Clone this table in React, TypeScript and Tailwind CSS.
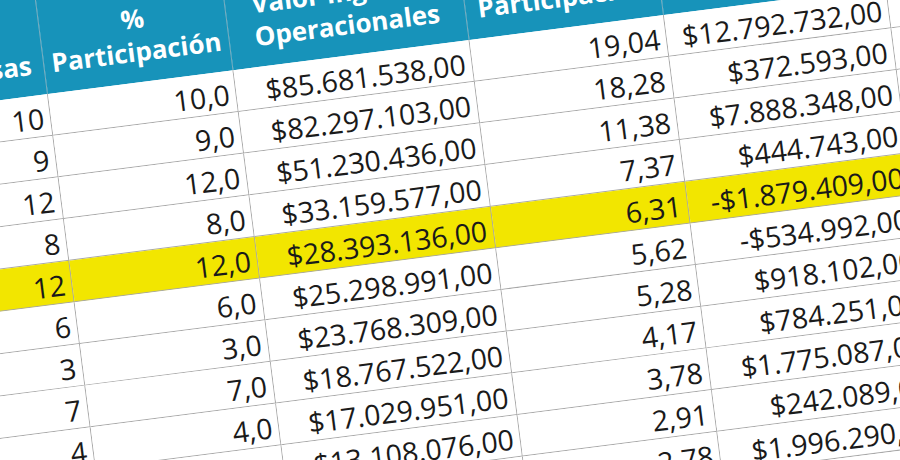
import React from "react";

const rows: string[][] = [
  ["10", "10,0", "$85.681.538,00", "19,04", "$12.792.732,00"],
  ["9", "9,0", "$82.297.103,00", "18,28", "$372.593,00"],
  ["12", "12,0", "$51.230.436,00", "11,38", "$7.888.348,00"],
  ["8", "8,0", "$33.159.577,00", "7,37", "$444.743,00"],
  ["12", "12,0", "$28.393.136,00", "6,31", "-$1.879.409,00"],
  ["6", "6,0", "$25.298.991,00", "5,62", "-$534.992,00"],
  ["3", "3,0", "$23.768.309,00", "5,28", "$918.102,00"],
  ["7", "7,0", "$18.767.522,00", "4,17", "$784.251,00"],
  ["4", "4,0", "$17.029.951,00", "3,78", "$1.775.087,00"],
  ["5", "5,0", "$13.108.076,00", "2,91", "$242.089,00"],
  ["2", "2,0", "$12.497.315,00", "2,78", "$1.996.290,00"],
  ["3", "3,0", "$11.320.468,00", "2,52", "$615.334,00"],
];

const headers: string[][] = [
  ["N°", "Empresas"],
  ["%", "Participación"],
  ["Valor Ingresos", "Operacionales"],
  ["%", "Participación"],
  ["Utilidad", "Neta"],
  ["", ""],
];

const HIGHLIGHT = 4;

export default function App() {
  return (
    <div
      className="w-[900px] h-[460px] overflow-hidden bg-white"
      style={{ fontFamily: '"Open Sans", "Noto Sans", sans-serif' }}
    >
      <div className="w-[1195px] ml-[-102px] mt-[-36px] origin-[150px_130px] rotate-[-7.3deg] grid grid-cols-[150px_187px_238px_196px_224px_200px]">
        {headers.map((h, i) => (
          <div
            key={"h" + i}
            className="h-[130px] bg-[#1793ba] border-r border-[#7eaebf] flex flex-col items-center justify-end pb-[14px] text-white font-bold text-[26px] leading-[33px] whitespace-nowrap"
          >
            <span>{h[0]}</span>
            <span>{h[1]}</span>
          </div>
        ))}
        {rows.map((r, ri) => (
          <React.Fragment key={"r" + ri}>
            {[...r, ""].map((c, ci) => (
              <div
                key={ci}
                className={
                  (ri === HIGHLIGHT ? "bg-[#f2e600] " : "bg-white ") +
                  "h-[42px] border-r border-b border-[#a8a8a8] pr-[6px] text-right text-[28.5px] leading-[46px] text-[#1a1a1a] whitespace-nowrap overflow-hidden"
                }
              >
                {c}
              </div>
            ))}
          </React.Fragment>
        ))}
      </div>
    </div>
  );
}
